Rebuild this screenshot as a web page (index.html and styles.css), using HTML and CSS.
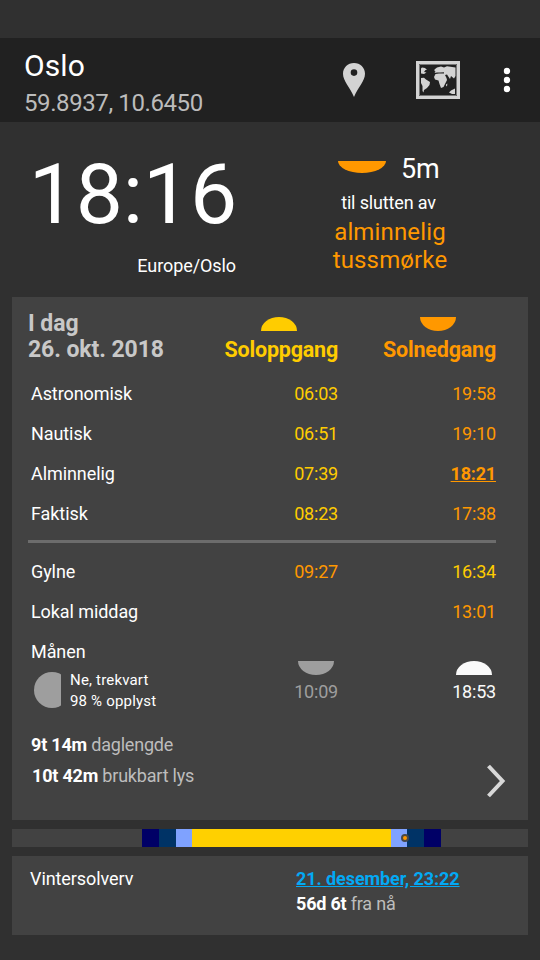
FILE: index.html
```html
<!DOCTYPE html>
<html lang="nb">
<head>
<meta charset="utf-8">
<title>Oslo</title>
<link rel="stylesheet" href="styles.css">
</head>
<body>
<header class="bar">
  <div class="place">
    <h1>Oslo</h1>
    <p>59.8937, 10.6450</p>
  </div>
  <svg class="pin" width="22" height="34" viewBox="0 0 22 34"><path fill="#d3d3d3" fill-rule="evenodd" d="M11 0C4.800 0 0 4.700 0 10.700C0 18 7 24 11 34C15 24 22 18 22 10.700C22 4.700 17.200 0 11 0ZM11 6.300a3.300 3.300 0 1 1 0 6.600a3.300 3.300 0 1 1 0-6.600Z"/></svg>
  <svg class="map" width="44" height="38" viewBox="0 0 44 38">
    <path fill="none" stroke="#d3d3d3" stroke-width="3" d="M1.500 1.500h41v35h-41z"/>
    <path fill="none" stroke="#777" stroke-width="1" d="M3.500 3.500h37v31h-37z"/>
    <path fill="#d3d3d3" d="M5 7.500L6 6.500L9 7L11 9L9.500 9L8 11L10.500 11.500L8 13L5 12.500ZM5 17L8 16.700L10 18.500L14 21L13.500 24L11 27L8 29L7.500 31.500L6.500 30L6.500 25L5 22ZM19.500 10.500L18.500 10V8.500L21 6.500L25 5.500L28 6.500L31 5.300L39.500 6.500V15L38 17.500L35 15L34 18L31 13.500L29 14L30.500 17L31 19L29 23L27.500 26L25 27L23.500 23L22.500 19.500L19 18.500L18 16L19.500 13L23 12.500L28 12.500L28 11.300L24 11.500L21 11.500L18.500 12ZM30 23.500L31.300 22.500L31.200 24.500L30.200 25.500ZM33 31.500L35 29.500L39 27.500V33H36Z"/>
  </svg>
  <svg class="dots" width="8" height="26" viewBox="0 0 8 26"><circle cx="4" cy="4" r="3.200"/><circle cx="4" cy="13" r="3.200"/><circle cx="4" cy="22" r="3.200"/></svg>
</header>

<section class="hero">
  <div class="clock">
    <div class="time">18:16</div>
    <div class="zone">Europe/Oslo</div>
  </div>
  <div class="next">
    <div class="left"><i class="sun set big"></i><span>5m</span></div>
    <div class="until">til slutten av</div>
    <div class="phase">alminnelig<br>tussmørke</div>
  </div>
</section>

<main class="card today">
  <div class="grid head">
    <h2>I dag<br><span class="date">26. okt. 2018</span></h2>
    <div class="col rise"><i class="sun up"></i><b>Soloppgang</b></div>
    <div class="col fall"><i class="sun set"></i><b>Solnedgang</b></div>
  </div>
  <div class="grid row"><span>Astronomisk</span><span class="rise">06:03</span><span class="fall">19:58</span></div>
  <div class="grid row"><span>Nautisk</span><span class="rise">06:51</span><span class="fall">19:10</span></div>
  <div class="grid row"><span>Alminnelig</span><span class="rise">07:39</span><span class="fall now">18:21</span></div>
  <div class="grid row"><span>Faktisk</span><span class="rise">08:23</span><span class="fall">17:38</span></div>
  <hr>
  <div class="grid row"><span>Gylne</span><span class="fall">09:27</span><span class="rise">16:34</span></div>
  <div class="grid row"><span>Lokal middag</span><span></span><span class="fall">13:01</span></div>
  <div class="grid moon">
    <div>
      <div class="moon-title">Månen</div>
      <div class="moon-info">
        <svg width="27" height="36" viewBox="0 0 27 36"><circle cx="18" cy="18" r="18" fill="#9e9e9e"/></svg>
        <p>Ne, trekvart<br>98 % opplyst</p>
      </div>
    </div>
    <div class="mcol dim"><i class="sun set"></i><span>10:09</span></div>
    <div class="mcol lit"><i class="sun up"></i><span>18:53</span></div>
  </div>
  <div class="foot">
    <div>
      <p><b>9t 14m</b> daglengde</p>
      <p class="usable"><b>10t 42m</b> brukbart lys</p>
    </div>
    <svg width="20" height="34" viewBox="0 0 20 34"><path d="M2.500 2L16.500 17L2.500 32" fill="none" stroke="#d8d8d8" stroke-width="4"/></svg>
  </div>
</main>

<div class="daybar">
  <i class="night"></i><i class="astro"></i><i class="naut"></i><i class="civil"></i><i class="day"></i><i class="civil"></i><i class="naut"></i><i class="astro"></i>
  <i class="marker"></i>
</div>

<section class="card solstice">
  <span>Vintersolverv</span>
  <div>
    <p class="when">21. desember, 23:22</p>
    <p class="away"><b>56d 6t</b> fra nå</p>
  </div>
</section>
</body>
</html>
```

FILE: styles.css
```css
* { box-sizing: border-box; margin: 0; padding: 0; }
body {
  width: 540px;
  height: 960px;
  padding-top: 38px;
  overflow: hidden;
  background: #303030;
  color: #fff;
  font: 18px/24px Roboto, "Liberation Sans", sans-serif;
  letter-spacing: -0.08px;
}
svg, i { display: block; }

.bar {
  display: flex;
  align-items: flex-start;
  height: 84px;
  padding-left: 24px;
  background: #212121;
}
.place { width: 319px; }
h1 { margin-top: 10px; font-size: 30px; line-height: 36px; font-weight: 400; letter-spacing: 0.1px; }
.place p { margin-top: 5px; font-size: 24px; line-height: 28px; letter-spacing: -0.4px; color: #bcbcbc; }
.pin { margin-top: 25px; }
.map { margin: 23px 0 0 51px; }
.dots { margin: 29px 0 0 43px; fill: #fff; }

.hero { display: flex; height: 175px; }
.clock { width: 236px; text-align: right; }
.time { margin: 26px -1px 0 0; font-size: 84px; line-height: 94px; letter-spacing: -0.2px; }
.zone { margin-top: 12px; }
.next { width: 180px; margin: 31px 0 0 64px; text-align: center; }
.left { display: flex; padding-left: 38px; font-size: 27px; line-height: 30px; }
.left span { margin: 1px 0 -1px 15px; }
.until { margin: 8px 3px 0 0; letter-spacing: -0.15px; }
.phase { margin-top: 3px; font-size: 24px; line-height: 28px; letter-spacing: 0.15px; color: #ff9800; }

.sun { width: 36px; height: 14px; background: currentColor; }
.up { border-radius: 18px 18px 0 0 / 14px 14px 0 0; }
.set { border-radius: 0 0 18px 18px / 0 0 14px 14px; }
.big { width: 48px; height: 12px; margin-top: 8px; color: #ff9800; border-radius: 0 0 24px 24px / 0 0 12px 12px; }

.rise { color: #ffcc00; }
.fall { color: #ff9800; }
.card { margin: 0 12px; background: #424242; }
.today { height: 523px; padding: 0 32px 0 16px; }
.grid { display: grid; grid-template-columns: 152px 158px 158px; }
.head { height: 77px; padding-top: 13px; }
h2 { padding-top: 1px; font-size: 23px; line-height: 26px; color: #c8c8c8; }
.col { padding-top: 7px; text-align: right; font-size: 21.500px; line-height: 26px; letter-spacing: -0.2px; }
.col .sun { margin: 0 0 6px auto; }
.col.rise .sun { margin-right: 41px; }
.col.fall .sun { margin-right: 40px; }
.row { height: 40px; line-height: 40px; }
.row span + span { text-align: right; letter-spacing: -0.2px; }
.row span:first-child { padding-left: 3px; }
.now { font-weight: 700; text-decoration: underline; }
hr { height: 3px; margin: 6px 0 9px; border: 0; background: #6c6c6c; }
.moon { height: 90px; }
.moon-title { padding-left: 3px; line-height: 40px; }
.moon-info { display: flex; padding-left: 6px; }
.moon-info p { margin: -2px 0 0 9px; font-size: 15px; line-height: 21px; letter-spacing: 0.18px; white-space: nowrap; }
.mcol { padding-top: 29px; text-align: right; letter-spacing: -0.2px; }
.mcol .sun { margin: 0 4px 5px auto; }
.dim { color: #9e9e9e; }
.lit { color: #fafafa; }
.foot { display: flex; justify-content: space-between; padding: 11px 0 0 3px; color: #bdbdbd; letter-spacing: -0.2px; }
.foot b, .away b { color: #fff; }
.foot p + p { margin-top: 7px; }
.foot .usable { padding-left: 1px; }
.foot svg { margin: 31px -10px 0 0; }

.daybar { position: relative; display: flex; height: 18px; margin: 9px 12px; background: #424242; }
.night { width: 130px; }
.astro { width: 17px; background: #000066; }
.naut { width: 17px; background: #003366; }
.civil { width: 16px; background: #7fa2ff; }
.day { width: 199px; background: #ffd000; }
.marker {
  position: absolute;
  left: 389px;
  top: 5px;
  width: 8px;
  height: 8px;
  border: 2px solid #484848;
  border-radius: 50%;
  background: #ff9800;
}

.solstice { display: flex; height: 79px; padding: 11px 0 0 18px; }
.solstice span { width: 266px; }
.when { color: #03a9f4; font-weight: 700; text-decoration: underline; }
.away { margin-top: 1px; color: #bdbdbd; letter-spacing: -0.2px; }
```
